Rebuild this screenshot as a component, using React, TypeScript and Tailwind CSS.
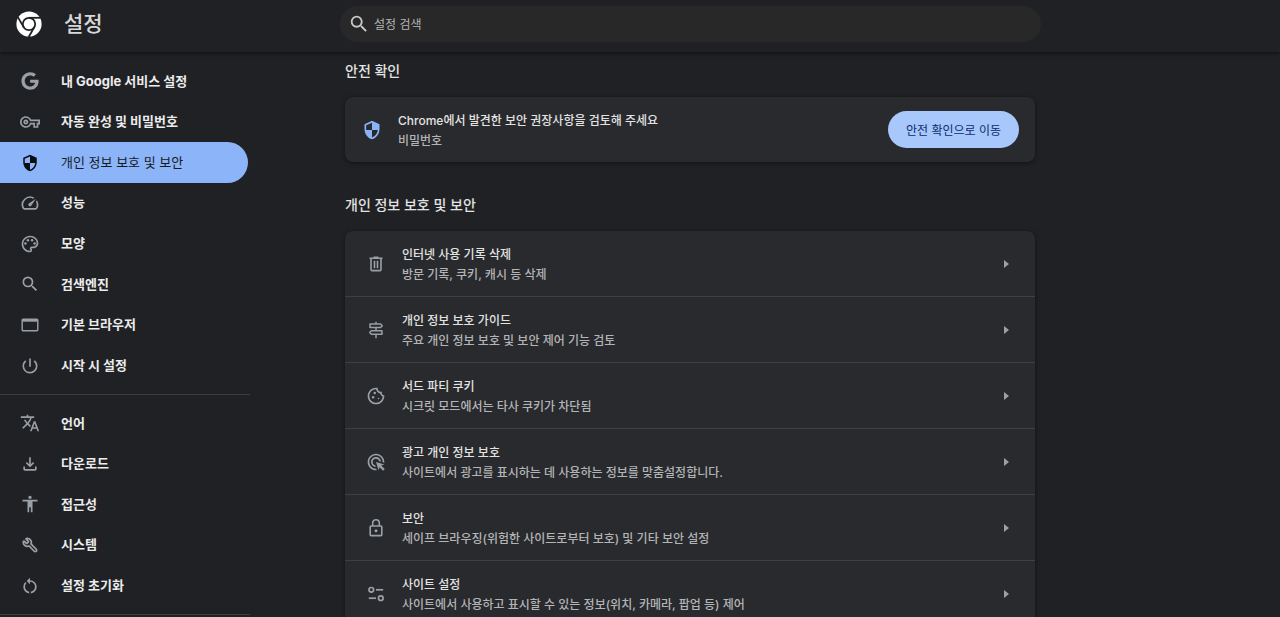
import React, { useState } from "react";
import { FaGoogle } from "react-icons/fa";
import { Wrench } from "lucide-react";
import {
  MdAccessibility,
  MdAdsClick,
  MdOutlineCookie,
  MdOutlineFileDownload,
  MdOutlinePalette,
  MdOutlineVpnKey,
  MdPowerSettingsNew,
  MdRestartAlt,
  MdSearch,
  MdSecurity,
  MdSpeed,
  MdTranslate,
} from "react-icons/md";

type IconType = React.ComponentType<{ className?: string }>;

type NavItem = {
  id: string;
  label: string;
  icon: IconType;
};

type SettingRow = {
  title: string;
  description: string;
  icon: IconType;
};

const ChromeLogo: IconType = ({ className }) => (
  <svg viewBox="0 0 26 26" className={className} aria-hidden="true">
    <circle cx="13" cy="13" r="12.6" fill="#fff" />
    <circle cx="13" cy="13" r="6.2" fill="#fff" stroke="#202124" strokeWidth="1.8" />
    <g stroke="#202124" strokeWidth="1.8" fill="none">
      <path d="M13 6.8h11.5" />
      <path d="M7.63 16.1 1.88 6.14" />
      <path d="M18.37 16.1l-5.75 9.96" />
    </g>
  </svg>
);

const TrashIcon: IconType = ({ className }) => (
  <svg viewBox="0 0 20 20" className={className} fill="none" stroke="currentColor" strokeWidth="1.6" aria-hidden="true">
    <path d="M3.5 4.3h13M7.5 3.2h5M5 4.5v11c0 .7.4 1.1 1.1 1.1h7.8c.7 0 1.1-.4 1.1-1.1v-11M8.5 6.8v7.4M11.5 6.8v7.4" />
  </svg>
);

const SignpostIcon: IconType = ({ className }) => (
  <svg viewBox="0 0 20 20" className={className} fill="none" stroke="currentColor" strokeWidth="1.5" strokeLinejoin="round" aria-hidden="true">
    <path d="M10 1.8v2M10 7.6v3M10 14.4v3.8" />
    <path d="M4 3.9h10.6l1.7 1.8-1.7 1.8H4z" />
    <path d="M16 10.7H5.4l-1.7 1.8 1.7 1.8H16z" />
  </svg>
);

const LockIcon: IconType = ({ className }) => (
  <svg viewBox="0 0 20 20" className={className} fill="none" stroke="currentColor" strokeWidth="1.6" aria-hidden="true">
    <rect x="4.2" y="8" width="11.6" height="9.6" rx=".8" />
    <path d="M6.7 8V5a3.3 3.3 0 0 1 6.6 0v3" />
    <circle cx="10" cy="12.8" r="1.5" fill="currentColor" stroke="none" />
  </svg>
);

const SiteSettingsIcon: IconType = ({ className }) => (
  <svg viewBox="0 0 20 20" className={className} fill="none" stroke="currentColor" strokeWidth="1.7" aria-hidden="true">
    <circle cx="5.3" cy="5.8" r="2.3" />
    <path d="M10 5.8h7.2" />
    <circle cx="14.8" cy="14.2" r="2.3" />
    <path d="M2.8 14.2H10" />
  </svg>
);

const WindowIcon: IconType = ({ className }) => (
  <svg viewBox="0 0 20 20" className={className} fill="none" stroke="currentColor" strokeWidth="1.4" aria-hidden="true">
    <rect x="2.2" y="4.2" width="15.6" height="11.6" rx="1" />
    <path d="M2.2 5.5h15.6" strokeWidth="2.4" />
  </svg>
);

const GoogleIcon: IconType = ({ className }) => (
  <span className={className}>
    <FaGoogle className="size-full p-px" />
  </span>
);

const ShieldIcon: IconType = ({ className }) => (
  <span className={className}>
    <MdSecurity className="size-full p-px" />
  </span>
);

const WrenchIcon: IconType = ({ className }) => (
  <span className={className}>
    <Wrench className="size-full -scale-x-100 p-[2px]" strokeWidth={2.6} />
  </span>
);

const mainItems: NavItem[] = [
  { id: "people", label: "내 Google 서비스 설정", icon: GoogleIcon },
  { id: "autofill", label: "자동 완성 및 비밀번호", icon: MdOutlineVpnKey },
  { id: "privacy", label: "개인 정보 보호 및 보안", icon: ShieldIcon },
  { id: "performance", label: "성능", icon: MdSpeed },
  { id: "appearance", label: "모양", icon: MdOutlinePalette },
  { id: "search", label: "검색엔진", icon: MdSearch },
  { id: "defaultBrowser", label: "기본 브라우저", icon: WindowIcon },
  { id: "onStartup", label: "시작 시 설정", icon: MdPowerSettingsNew },
];

const advancedItems: NavItem[] = [
  { id: "languages", label: "언어", icon: MdTranslate },
  { id: "downloads", label: "다운로드", icon: MdOutlineFileDownload },
  { id: "accessibility", label: "접근성", icon: MdAccessibility },
  { id: "system", label: "시스템", icon: WrenchIcon },
  { id: "reset", label: "설정 초기화", icon: MdRestartAlt },
];

const privacyRows: SettingRow[] = [
  { title: "인터넷 사용 기록 삭제", description: "방문 기록, 쿠키, 캐시 등 삭제", icon: TrashIcon },
  { title: "개인 정보 보호 가이드", description: "주요 개인 정보 보호 및 보안 제어 기능 검토", icon: SignpostIcon },
  { title: "서드 파티 쿠키", description: "시크릿 모드에서는 타사 쿠키가 차단됨", icon: MdOutlineCookie },
  { title: "광고 개인 정보 보호", description: "사이트에서 광고를 표시하는 데 사용하는 정보를 맞춤설정합니다.", icon: MdAdsClick },
  { title: "보안", description: "세이프 브라우징(위험한 사이트로부터 보호) 및 기타 보안 설정", icon: LockIcon },
  { title: "사이트 설정", description: "사이트에서 사용하고 표시할 수 있는 정보(위치, 카메라, 팝업 등) 제어", icon: SiteSettingsIcon },
];

const App: React.FC = () => {
  const [selected, setSelected] = useState("privacy");
  const [query, setQuery] = useState("");

  return (
    <div className="flex h-screen flex-col overflow-hidden bg-[#202124] font-['Inter','Noto_Sans_CJK_KR',sans-serif] text-[#e3e3e3]">
      <header className="z-10 flex h-[52px] shrink-0 items-center shadow-[0_1px_4px_rgba(0,0,0,0.6)]">
        <div className="flex w-[250px] shrink-0 items-center pb-1 pl-4">
          <ChromeLogo className="size-[26px]" />
          <h1 className="pl-[22px] text-[21px] leading-7 font-medium text-[#d8d8d8]">설정</h1>
        </div>
        <label className="mr-6 mb-1 ml-[90px] flex h-9 w-full max-w-[701px] items-center rounded-full bg-[#282828] pl-2 text-[#c7c7c7]">
          <MdSearch className="size-[22px] shrink-0" />
          <input
            type="text"
            aria-label="설정 검색"
            placeholder="설정 검색"
            value={query}
            onChange={(e) => setQuery(e.target.value)}
            className="ml-1 w-full bg-transparent pt-0.5 text-xs outline-none placeholder:text-[#b4b4b4]"
          />
        </label>
      </header>

      <div className="flex min-h-0 flex-1">
        <nav className="w-[250px] shrink-0 overflow-hidden pt-[9px]">
          <ul className="grid h-[325px] auto-rows-fr">
            {mainItems.map((item) => (
              <NavLink key={item.id} item={item} active={selected === item.id} onSelect={setSelected} />
            ))}
          </ul>
          <hr className="my-2 border-[#3c3d40]" />
          <ul className="grid h-[203px] auto-rows-fr">
            {advancedItems.map((item) => (
              <NavLink key={item.id} item={item} active={selected === item.id} onSelect={setSelected} />
            ))}
          </ul>
          <hr className="my-2 border-[#3c3d40]" />
        </nav>

        <main className="mr-6 ml-[95px] w-full max-w-[690px]">
          <h2 className="pt-[9px] text-sm leading-5 font-medium">안전 확인</h2>
          <section className="mt-4 flex h-[65px] items-center rounded-lg bg-[#292a2d] pr-4 pl-[17px] shadow-[0_1px_4px_rgba(0,0,0,0.5)]">
            <MdSecurity className="size-5 shrink-0 text-[#8ab4f8]" />
            <div className="ml-4 flex-1 pt-0.5 text-xs leading-5 font-medium">
              <p>Chrome에서 발견한 보안 권장사항을 검토해 주세요</p>
              <p className="text-[#b3b4b6]">비밀번호</p>
            </div>
            <button
              type="button"
              className="h-[37px] w-[131px] cursor-pointer rounded-full bg-[#a8c7fa] pt-0.5 text-xs text-[#062e6f]"
            >
              안전 확인으로 이동
            </button>
          </section>

          <h2 className="pt-[33px] text-sm leading-5 font-medium">개인 정보 보호 및 보안</h2>
          <section className="mt-4 divide-y divide-[#3f4043] rounded-lg bg-[#292a2d] shadow-[0_1px_4px_rgba(0,0,0,0.5)]">
            {privacyRows.map((row) => (
              <Row key={row.title} row={row} />
            ))}
          </section>
        </main>
      </div>
    </div>
  );
};

export default App;

const NavLink: React.FC<{
  item: NavItem;
  active: boolean;
  onSelect: (id: string) => void;
}> = ({ item, active, onSelect }) => {
  const Icon = item.icon;
  return (
    <li className="flex">
      <a
        href={`#${item.id}`}
        onClick={() => onSelect(item.id)}
        className={
          active
            ? "mr-[2px] flex flex-1 items-center rounded-r-full bg-[#8cb4f8] pl-5 text-[13px] text-[#17191d]"
            : "mr-[2px] flex flex-1 items-center rounded-r-full pl-5 text-[13px] font-bold text-[#ececec]"
        }
      >
        <Icon className={active ? "size-5 shrink-0 text-[#0b0d10]" : "size-5 shrink-0 text-[#9aa0a6]"} />
        <span className="ml-[21px]">{item.label}</span>
      </a>
    </li>
  );
};

const Row: React.FC<{ row: SettingRow }> = ({ row }) => {
  const Icon = row.icon;
  return (
    <button type="button" className="flex h-[66px] w-full cursor-pointer items-center pr-[26px] pl-[21px] text-left">
      <Icon className="size-5 shrink-0 text-[#9aa0a6]" />
      <span className="ml-4 flex flex-1 flex-col pt-0.5 text-xs leading-5 font-medium">
        <span>{row.title}</span>
        <span className="text-[#b3b4b6]">{row.description}</span>
      </span>
      <svg viewBox="0 0 5 8" className="h-2 w-[5px]" fill="#9aa0a6" aria-hidden="true">
        <path d="M0 0l5 4-5 4z" />
      </svg>
    </button>
  );
};
